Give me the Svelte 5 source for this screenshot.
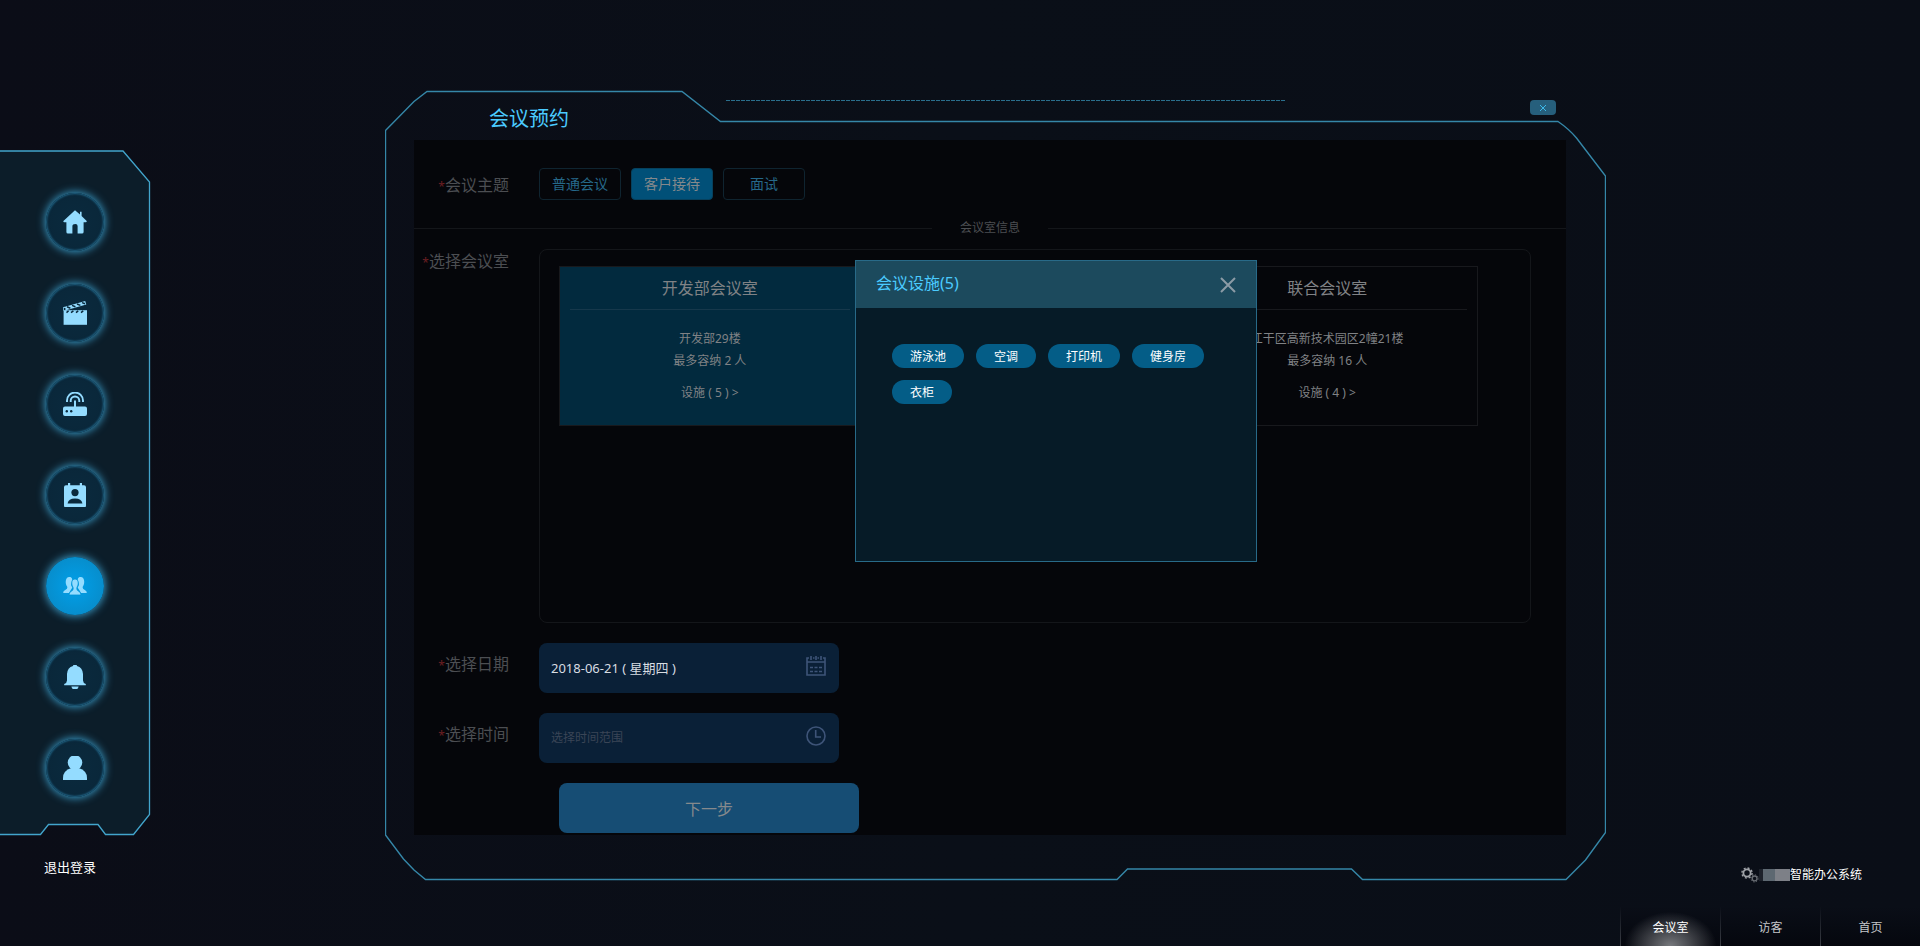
<script lang="ts">
	type Room = { name: string; address: string; capacity: number; facilities: number };

	const menu = ['home', 'movie', 'router', 'contact', 'group', 'bell', 'user'];
	const topics = ['普通会议', '客户接待', '面试'];
	const facilities = ['游泳池', '空调', '打印机', '健身房', '衣柜'];
	const tabs = ['会议室', '访客', '首页'];
	const rooms: Room[] = [
		{ name: '开发部会议室', address: '开发部29楼', capacity: 2, facilities: 5 },
		{ name: '联合会议室', address: '江干区高新技术园区2幢21楼', capacity: 16, facilities: 4 }
	];

	let activeMenu = $state('group');
	let topic = $state('客户接待');
	let room = $state('开发部会议室');
	let tab = $state('会议室');
	let date = $state('2018-06-21 ( 星期四 )');
	let time = $state('');
	let showFacilities = $state(true);
</script>

<svelte:head>
	<title>会议预约</title>
</svelte:head>

{#snippet menuIcon(name: string)}
	<svg viewBox="0 0 24 24" width="24" height="24" fill="currentColor">
		{#if name === 'home'}
			<path d="M12 0.3 L17 4.6 V1.8 H18.6 V6 L23.7 11 Q24 12.2 22.6 12.2 H20.6 V22 Q20.6 23.6 19 23.6 H14.6 V16 Q14.6 14 12.4 14 Q9.4 14 9.4 16 V23.6 H5 Q3.4 23.6 3.4 22 V12.2 H1.4 Q0 12.2 0.4 11 Z" />
		{:else if name === 'movie'}
			<path d="M0.6 9.2 H24 V23.8 H0.6 Z" />
			<path d="M0.2 6.2 L22.2 0 L23.3 3.4 L2.2 9.4 Z" />
			<path d="M4 5.8 L7.4 7.2 M9 4.4 L12.4 5.8 M14 3 L17.4 4.4 M19 1.6 L22 2.8 M3.5 11.6 L5.6 9.8 M8 11.6 L10.4 9.8 M13 11.6 L15.2 9.8 M18 11.6 L20.2 9.8" stroke="#0a293c" stroke-width="1.5" />
			<circle cx="1.6" cy="8" r="1.6" fill="#0a293c" stroke="currentColor" stroke-width="1" />
		{:else if name === 'router'}
			<path d="M2 14.6 H11 V8.4 H13 V14.6 H22 Q24 14.6 24 16.6 V22 Q24 24 22 24 H2 Q0 24 0 22 V16.6 Q0 14.6 2 14.6 Z" />
			<path d="M4 10 V8.6 A8 8 0 0 1 20 8.6 V10 M7.7 10 V8.8 A4.3 4.3 0 0 1 16.3 8.8 V10" fill="none" stroke="currentColor" stroke-width="1.9" />
			<circle cx="3.8" cy="19.2" r="1.2" fill="#0a293c" />
			<circle cx="8.2" cy="19.2" r="1.2" fill="#0a293c" />
		{:else if name === 'contact'}
			<path d="M3 2.2 H5 V0 H7.2 V2.2 H16.8 V0 H19 V2.2 H21 Q23 2.2 23 4.2 V22.6 Q23 24.6 21 24.6 H3 Q1 24.6 1 22.6 V4.2 Q1 2.2 3 2.2 Z" />
			<circle cx="12" cy="9.6" r="3.6" fill="#0a293c" />
			<path d="M4.6 20.4 Q5.4 15.6 12 15.6 Q18.6 15.6 19.4 20.4 Z" fill="#0a293c" />
		{:else if name === 'group'}
			<path d="M6.2 3 C9 3 9.6 5 8.9 7.2 C7.5 10 8 11.6 9.4 13.6 L7.4 16.6 L6 19 H0.2 Q0 17 2.2 16 Q4.6 15 4.4 13 C1.6 9.6 2.4 3 6.2 3 Z" />
			<path d="M17.8 3 C15 3 14.4 5 15.1 7.2 C16.5 10 16 11.6 14.6 13.6 L16.6 16.6 L18 19 H23.8 Q24 17 21.8 16 Q19.4 15 19.6 13 C22.4 9.6 21.6 3 17.8 3 Z" />
			<path d="M12 5 C15.4 5 15.6 9 14.8 11.4 L13.8 14 Q13.4 16.4 16 17.4 Q18 18.4 18 21 H6 Q6 18.4 8 17.4 Q10.6 16.4 10.2 14 L9.2 11.4 C8.4 9 8.6 5 12 5 Z" stroke="#0092d6" stroke-width="0.8" />
		{:else if name === 'bell'}
			<path d="M12 -0.6 Q13.8 -0.6 14 1 Q19.6 2.6 20 9 V15.4 Q20 17.6 22.8 19 V20.2 H1.2 V19 Q4 17.6 4 15.4 V9 Q4.4 2.6 10 1 Q10.2 -0.6 12 -0.6 Z" />
			<path d="M8.4 21.4 H15.6 Q14.8 24.8 12 24.8 Q9.2 24.8 8.4 21.4 Z" />
		{:else}
			<circle cx="12" cy="6.6" r="7.3" />
			<path d="M8.4 12 H15.6 Q24 14.6 24 22 V24.6 H0 V22 Q0 14.6 8.4 12 Z" />
		{/if}
	</svg>
{/snippet}

<div class="page">
	<aside class="sidebar">
		<nav class="menu">
			<svg class="menu-frame" viewBox="0 0 151 686" preserveAspectRatio="none">
				<path d="M-2 1 H123 L149.5 32 V664.5 L133.5 684.5 H105.5 L98 674.5 H48.5 L40.5 684.5 H-2 Z" />
			</svg>
			{#each menu as item}
				<button class="menu-item" class:active={activeMenu === item} aria-label={item} onclick={() => (activeMenu = item)}>
					{@render menuIcon(item)}
				</button>
			{/each}
		</nav>
		<a class="logout" href="/logout">退出登录</a>
	</aside>

	<main class="panel">
		<svg class="panel-frame" viewBox="0 0 1221 791" preserveAspectRatio="none">
			<path d="M0.5 40.5 L29 11.5 L42 1.5 H297 L335.5 31.5 H1173 Q1184 39 1191.5 48 L1220.5 86 V742.5 L1200.5 770 L1181 789.5 H977.5 L966.5 779 H742.5 L732 789.5 H40.5 L29 780 L18.5 769 L0.5 745 Z" />
			<path class="dash" d="M341 10.5 H901" />
		</svg>

		<header class="panel-header">
			<h1>会议预约</h1>
			<button class="panel-close" aria-label="关闭">
				<svg viewBox="0 0 8 8" width="8" height="8"><path d="M1 1 L7 7 M7 1 L1 7" /></svg>
			</button>
		</header>

		<form class="form" onsubmit={(e) => e.preventDefault()}>
			<div class="row topic-row">
				<span class="label" id="topic-label"><i>*</i>会议主题</span>
				<div class="topics" role="group" aria-labelledby="topic-label">
					{#each topics as item}
						<button type="button" class="topic" class:active={topic === item} onclick={() => (topic = item)}>{item}</button>
					{/each}
				</div>
			</div>

			<div class="divider"><span>会议室信息</span></div>

			<div class="row room-row">
				<span class="label" id="room-label"><i>*</i>选择会议室</span>
				<div class="rooms" role="group" aria-labelledby="room-label">
					{#each rooms as item}
						<button type="button" class="room" class:active={room === item.name} onclick={() => (room = item.name)}>
							<strong>{item.name}</strong>
							<span>{item.address}</span>
							<span>最多容纳 {item.capacity} 人</span>
							<span class="more">设施 ( {item.facilities} ) &gt;</span>
						</button>
					{/each}
				</div>
			</div>

			<div class="row field-row">
				<label class="label" for="date"><i>*</i>选择日期</label>
				<div class="field">
					<input id="date" type="text" bind:value={date} />
					<svg viewBox="0 0 20 20" width="20" height="20">
						<path d="M3 2 H1 V19 H19 V2 H17 M7 2 H8.5 M11.5 2 H13 M1 6 H19 M5 0 V4 M10 0 V4 M15 0 V4" />
						<path d="M4 11.5 H7 M8.5 11.5 H11.5 M13 11.5 H16 M4 15.5 H7 M8.5 15.5 H11.5 M13 15.5 H16" />
					</svg>
				</div>
			</div>

			<div class="row field-row">
				<label class="label" for="time"><i>*</i>选择时间</label>
				<div class="field">
					<input id="time" type="text" placeholder="选择时间范围" bind:value={time} />
					<svg viewBox="0 0 20 20" width="20" height="20">
						<circle cx="10" cy="10" r="9" />
						<path d="M9.7 4 V11 H15" />
					</svg>
				</div>
			</div>

			<button class="next" type="submit">下一步</button>
		</form>

		{#if showFacilities}
			<div class="dialog" role="dialog" aria-labelledby="dialog-title">
				<header>
					<h2 id="dialog-title">会议设施(5)</h2>
					<button aria-label="关闭" onclick={() => (showFacilities = false)}>
						<svg viewBox="0 0 16 16" width="16" height="16"><path d="M1 1 L15 15 M15 1 L1 15" /></svg>
					</button>
				</header>
				<ul>
					{#each facilities as item}
						<li>{item}</li>
					{/each}
				</ul>
			</div>
		{/if}
	</main>

	<footer class="corner">
		<div class="brand">
			<svg viewBox="0 0 18 16" width="18" height="16" fill="none">
				<circle cx="6" cy="6" r="3.6" stroke="#a0a3a8" stroke-width="1.8" />
				<circle cx="6" cy="6" r="5.1" stroke="#a0a3a8" stroke-width="1.4" stroke-dasharray="2 2" />
				<circle cx="13.6" cy="11.4" r="2.4" stroke="#686c73" stroke-width="1.3" />
				<circle cx="13.6" cy="11.4" r="3.6" stroke="#686c73" stroke-width="1" stroke-dasharray="1.4 1.4" />
			</svg>
			<span class="mask"></span>
			<span>智能办公系统</span>
		</div>
		<nav class="tabs">
			{#each tabs as item}
				<button class:active={tab === item} onclick={() => (tab = item)}>{item}</button>
			{/each}
		</nav>
	</footer>
</div>

<style>
	:global(body) {
		background: #0a0e17;
	}

	.page {
		display: grid;
		grid-template-columns: 151px minmax(900px, 1fr) 314px;
		min-height: 100vh;
		background: linear-gradient(90deg, #0b0d17, #0a0f18 50%, #0a0e17);
		font-family: 'Noto Sans', 'Noto Sans CJK SC', sans-serif;
		font-size: 12px;
		color: #fff;
	}

	.page :global(*) {
		box-sizing: border-box;
	}

	button {
		margin: 0;
		padding: 0;
		border: 0;
		background: none;
		color: inherit;
		font: inherit;
		cursor: pointer;
	}

	/* left menu */
	.sidebar {
		padding-top: 150px;
	}

	.menu {
		position: relative;
		display: flex;
		flex-direction: column;
		align-items: center;
		gap: 33px;
		height: 686px;
		padding: 43px 2px 0 0;
	}

	.menu-frame {
		position: absolute;
		inset: 0;
		width: 100%;
		height: 100%;
		fill: #0c1d29;
		stroke: #42a5cc;
		stroke-width: 1.3;
	}

	.menu-item {
		position: relative;
		display: flex;
		align-items: center;
		justify-content: center;
		width: 58px;
		height: 58px;
		border-radius: 50%;
		background: radial-gradient(#0a2a3e, #0a2638);
		box-shadow: 0 0 8px 1px #3a9cc8, inset 0 0 2px 1px #1f6385;
		color: #94dcff;
	}

	.menu-item.active {
		background: radial-gradient(#00a0ea, #0a86c0);
		box-shadow: 0 0 8px 1px #3a9cc8;
	}

	.logout {
		display: block;
		margin: 21px 0 0 44px;
		font-size: 13px;
		line-height: 20px;
		color: #fff;
		text-decoration: none;
	}

	/* reservation panel */
	.panel {
		position: relative;
		align-self: start;
		margin: 90px 0 0 234px;
		padding: 0 40px 46px 29px;
	}

	.panel-frame {
		position: absolute;
		inset: 0;
		width: 100%;
		height: 100%;
		fill: none;
		stroke: #3587a8;
		stroke-width: 1.4;
	}

	.dash {
		stroke: #2a6f8c;
		stroke-width: 1;
		stroke-dasharray: 4 1;
	}

	.panel-header {
		position: relative;
		display: flex;
		justify-content: space-between;
		align-items: flex-start;
		height: 50px;
		padding: 10px 10px 0 75px;
	}

	h1 {
		margin: 4px 0 0;
		font-size: 20px;
		font-weight: 400;
		line-height: 30px;
		color: #4bcbff;
	}

	.panel-close {
		display: flex;
		align-items: center;
		justify-content: center;
		width: 26px;
		height: 15px;
		border-radius: 4px;
		background: #265f7c;
	}

	.panel-close svg {
		stroke: #3db9e8;
	}

	.form {
		position: relative;
		padding: 28px 0 2px;
		background: #05060a;
	}

	.row {
		display: grid;
		grid-template-columns: 95px 1fr;
		column-gap: 30px;
	}

	.label {
		font-size: 16px;
		line-height: 24px;
		text-align: right;
		color: #4c4e52;
		white-space: nowrap;
	}

	.label i {
		font-size: 12px;
		font-style: normal;
		color: #6b1f22;
	}

	.topic-row .label {
		padding-top: 5px;
	}

	.topics {
		display: flex;
		gap: 10px;
	}

	.topic {
		width: 82px;
		height: 32px;
		padding-bottom: 2px;
		border: 1px solid #0f2430;
		border-radius: 4px;
		font-size: 14px;
		color: #25698a;
	}

	.topic.active {
		border-color: #06415e;
		background: #015078;
		color: #85898c;
	}

	.divider {
		display: flex;
		align-items: center;
		gap: 28px;
		margin: 17px 0 10px;
		line-height: 22px;
		color: #4c4e52;
	}

	.divider::before,
	.divider::after {
		content: '';
		flex: 1;
		border-top: 1px solid #14161a;
	}

	.rooms {
		display: grid;
		grid-template-columns: repeat(3, 1fr);
		column-gap: 7px;
		align-content: start;
		height: 374px;
		margin-right: 35px;
		padding: 16px 52px 0 19px;
		border: 1px solid #14161a;
		border-radius: 8px;
	}

	.room {
		display: flex;
		flex-direction: column;
		height: 160px;
		padding: 0 10px;
		border: 1px solid #18191d;
		line-height: 22px;
		text-align: center;
		color: #808285;
	}

	.room:last-child {
		grid-column: 3;
	}

	.room.active {
		background: #022a3e;
	}

	.room strong {
		margin-bottom: 18px;
		border-bottom: 1px solid #18191d;
		font-size: 16px;
		font-weight: 400;
		line-height: 42px;
	}

	.room.active strong {
		border-color: #16384b;
	}

	.more {
		margin-top: 10px;
	}

	.field-row {
		margin-top: 20px;
	}

	.field-row .label {
		padding-top: 9px;
	}

	.field {
		display: flex;
		align-items: center;
		justify-content: space-between;
		width: 300px;
		height: 50px;
		padding: 0 13px 4px 12px;
		border-radius: 8px;
		background: #0a2037;
	}

	.field input {
		width: 220px;
		height: 44px;
		margin: 2px 0 0;
		padding: 0;
		border: 0;
		outline: 0;
		background: none;
		font-family: inherit;
		font-size: 13px;
		color: #d8dde2;
	}

	.field input::placeholder {
		font-size: 12px;
		color: #3a4556;
		opacity: 1;
	}

	.field svg {
		fill: none;
		stroke: #3e5478;
		stroke-width: 1.6;
	}

	.next {
		display: block;
		width: 300px;
		height: 50px;
		margin: 20px 0 0 145px;
		border-radius: 8px;
		background: #164d74;
		font-size: 16px;
		color: #85898c;
	}

	/* facilities dialog */
	.dialog {
		position: absolute;
		top: 170px;
		left: 470px;
		width: 402px;
		height: 302px;
		border: 1px solid #286a88;
		background: #061b27;
	}

	.dialog header {
		display: flex;
		justify-content: space-between;
		align-items: center;
		height: 47px;
		padding: 0 20px;
		background: #1c4a5d;
	}

	.dialog h2 {
		margin: 0 0 4px;
		font-size: 16px;
		font-weight: 400;
		line-height: 24px;
		color: #4bcbff;
	}

	.dialog header svg {
		display: block;
		stroke: #8b9ba6;
		stroke-width: 2;
	}

	.dialog ul {
		display: flex;
		flex-wrap: wrap;
		gap: 12px;
		margin: 0;
		padding: 36px;
		list-style: none;
	}

	.dialog li {
		height: 24px;
		padding: 0 18px;
		border-radius: 12px;
		background: #045d87;
		line-height: 26px;
	}

	/* bottom right corner */
	.corner {
		display: flex;
		flex-direction: column;
		justify-content: flex-end;
		align-items: flex-end;
	}

	.brand {
		display: flex;
		align-items: center;
		margin: 0 58px 22px 0;
		line-height: 20px;
	}

	.mask {
		width: 31px;
		height: 12px;
		background: linear-gradient(90deg, #1d222b 4px, #5d6871 4px, #5d6871 16px, #7d8087 16px);
	}

	.tabs {
		display: flex;
		background: linear-gradient(#0a0e17, #05070e);
	}

	.tabs button {
		width: 100px;
		height: 39px;
		border: 1px solid;
		border-image: linear-gradient(#0a0e17, #3c3f46) 1;
		border-width: 0 0 0 1px;
		color: #c4c6c9;
	}

	.tabs button.active {
		background: radial-gradient(ellipse 46px 34px at 50% 100%, #77797d, transparent);
		color: #fff;
	}
</style>
